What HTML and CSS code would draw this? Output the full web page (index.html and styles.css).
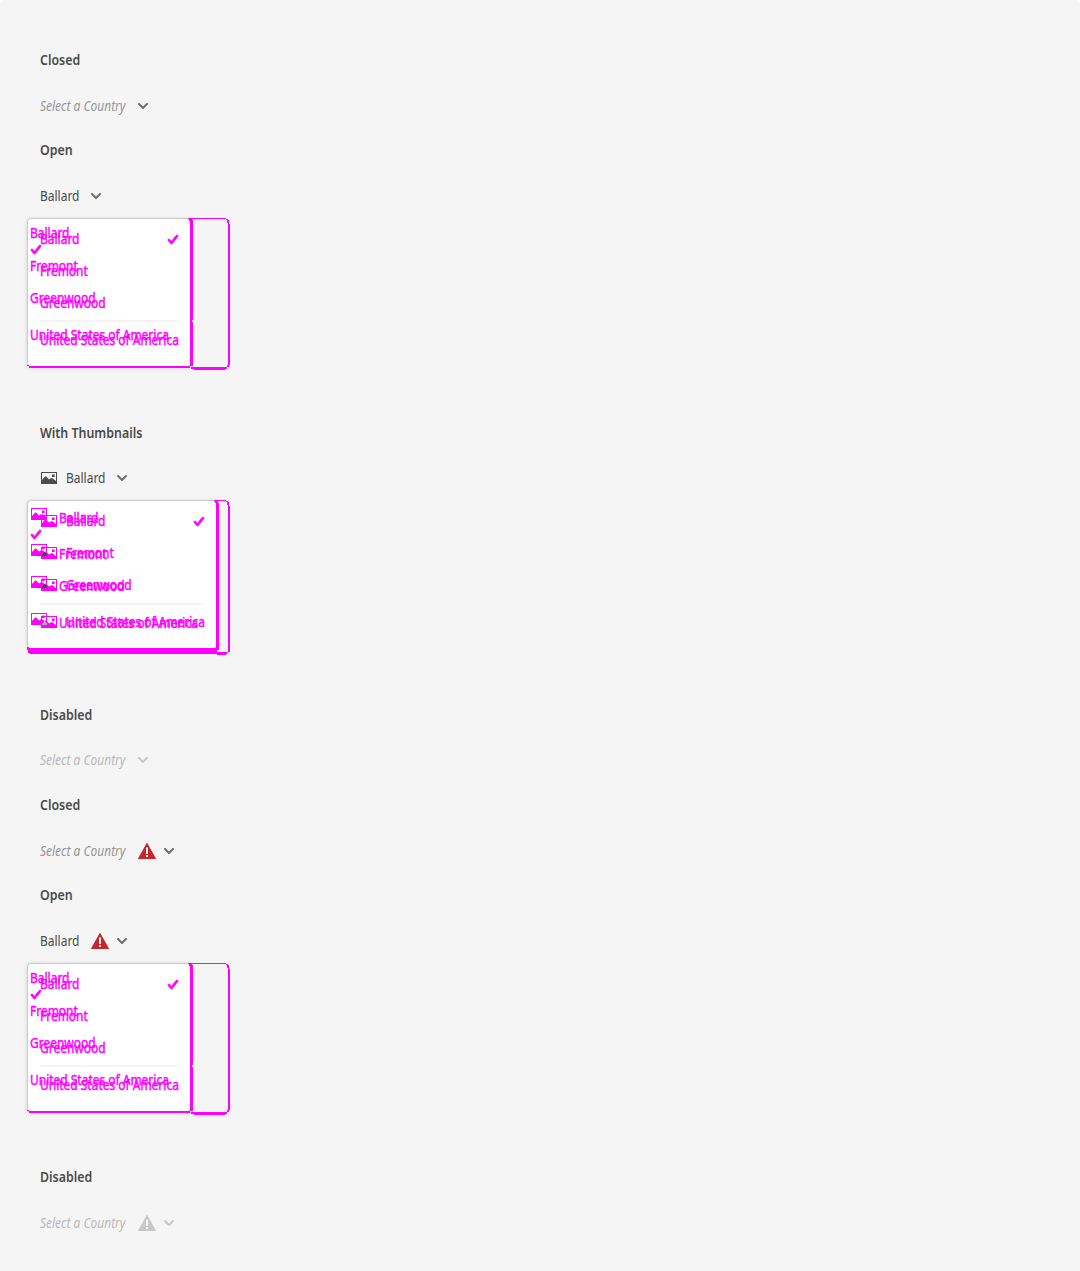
FILE: index.html
```html
<!DOCTYPE html>
<html lang="en">
<head>
<meta charset="utf-8">
<title>Select a Country</title>
<link rel="stylesheet" href="styles.css">
</head>
<body>
<svg class="sprite" aria-hidden="true">
  <symbol id="chevron" viewBox="0 0 10 6"><path d="M9.99 1.01A1 1 0 0 0 8.283.303L5 3.586 1.717.303A1 1 0 1 0 .303 1.717l3.99 3.98a1 1 0 0 0 1.414 0l3.99-3.98a.997.997 0 0 0 .293-.707z"/></symbol>
  <symbol id="check" viewBox="0 0 12 12"><path d="M4.5 10a1.022 1.022 0 0 1-.799-.384l-2.488-3a1 1 0 0 1 1.576-1.233L4.5 7.376l4.712-5.991a1 1 0 1 1 1.576 1.23l-5.51 7A.978.978 0 0 1 4.5 10z" stroke="currentColor" stroke-width=".9"/></symbol>
  <symbol id="alert" viewBox="0 0 18 18"><path d="M8.564 1.289L.2 16.256A.5.5 0 0 0 .636 17h16.728a.5.5 0 0 0 .436-.744L9.436 1.289a.5.5 0 0 0-.872 0zM10 14.75a.25.25 0 0 1-.25.25h-1.5a.25.25 0 0 1-.25-.25v-1.5a.25.25 0 0 1 .25-.25h1.5a.25.25 0 0 1 .25.25zm0-3a.25.25 0 0 1-.25.25h-1.5a.25.25 0 0 1-.25-.25v-6a.25.25 0 0 1 .25-.25h1.5a.25.25 0 0 1 .25.25z"/></symbol>
  <symbol id="image" viewBox="0 0 16 12"><path fill-rule="evenodd" d="M0 0h16v12H0zM1 1v7l3.2-3.4h1L8 7.4 10 6.2h1.4L15 9V1zM11 2.4h2.6v2.5H11z"/></symbol>
</svg>
<main class="page">
  <section class="example">
    <h4>Closed</h4>
    <div class="field placeholder"><span class="label">Select a Country</span><svg class="chevron"><use href="#chevron"/></svg></div>
  </section>

  <section class="example open">
    <h4>Open</h4>
    <div class="field"><span class="label">Ballard</span><svg class="chevron"><use href="#chevron"/></svg></div>
    <div class="menu">
      <div class="panel"><hr></div>
      <svg class="outline" viewBox="0 0 204 153"><path d="M2 148H163V150H2zM0 147h2v1H0zM161 0h4v2h1v146h-3V3h-1V1h-1zM165 0h34v1h-34zM199 1h2v1h1v4h1v141h-2V5h-1V2h-1zM164 149h36v2h-36zM167 151h31v1h-31zM200 147h2v2h-2z"/><path class="gap" d="M165 102h1v2h-1z"/></svg>
      <ul class="list before">
        <li><span>Ballard</span></li><li class="mark"><svg class="check"><use href="#check"/></svg></li><li><span>Fremont</span></li><li><span>Greenwood</span></li><li><span>United States of America</span></li>
      </ul>
      <ul class="list after">
        <li><span>Ballard</span><svg class="check"><use href="#check"/></svg></li><li><span>Fremont</span></li><li><span>Greenwood</span></li><li><span>United States of America</span></li>
      </ul>
    </div>
  </section>

  <section class="example open thumbs">
    <h4>With Thumbnails</h4>
    <div class="field"><svg class="image"><use href="#image"/></svg><span class="label">Ballard</span><svg class="chevron"><use href="#chevron"/></svg></div>
    <div class="menu">
      <div class="panel"><hr></div>
      <svg class="outline" viewBox="0 0 204 156"><path d="M0 147h2v1h187v-1h2v3h-1v2h-2v1H3v-1H1v-2H0zM187 0h3v1h1v2h1v147h-3V3h-1V1h-1zM190 0h9v1h-9zM199 1h2v1h1v4h1v146h-2V5h-1V2h-1zM1 152h200v1h-1v1H3v-1H1z"/><path d="M190 153h9v2h-9z"/></svg>
      <ul class="list before">
        <li><svg class="image"><use href="#image"/></svg><span>Ballard</span></li><li class="mark"><svg class="check"><use href="#check"/></svg></li><li><svg class="image"><use href="#image"/></svg><span>Fremont</span></li><li><svg class="image"><use href="#image"/></svg><span>Greenwood</span></li><li><svg class="image"><use href="#image"/></svg><span>United States of America</span></li>
      </ul>
      <ul class="list after">
        <li><svg class="image"><use href="#image"/></svg><span>Ballard</span><svg class="check"><use href="#check"/></svg></li><li><svg class="image"><use href="#image"/></svg><span>Fremont</span></li><li><svg class="image"><use href="#image"/></svg><span>Greenwood</span></li><li><svg class="image"><use href="#image"/></svg><span>United States of America</span></li>
      </ul>
      <svg class="overlap" viewBox="0 0 204 156"><path d="M15 54l2-2 3 2v2h-5zM15 86l2-2 3 2v2h-5z"/><path class="light" d="M15 123l2-2 3 2v2h-5z"/></svg>
    </div>
  </section>

  <section class="example high">
    <h4>Disabled</h4>
    <div class="field placeholder disabled"><span class="label">Select a Country</span><svg class="chevron"><use href="#chevron"/></svg></div>
  </section>

  <section class="example">
    <h4>Closed</h4>
    <div class="field placeholder"><span class="label">Select a Country</span><svg class="alert"><use href="#alert"/></svg><svg class="chevron"><use href="#chevron"/></svg></div>
  </section>

  <section class="example open last">
    <h4>Open</h4>
    <div class="field"><span class="label">Ballard</span><svg class="alert"><use href="#alert"/></svg><svg class="chevron"><use href="#chevron"/></svg></div>
    <div class="menu">
      <div class="panel"><hr></div>
      <svg class="outline" viewBox="0 0 204 153"><path d="M2 148H163V150H2zM0 147h2v1H0zM161 0h4v2h1v146h-3V3h-1V1h-1zM165 0h34v1h-34zM199 1h2v1h1v4h1v141h-2V5h-1V2h-1zM164 149h36v2h-36zM167 151h31v1h-31zM200 147h2v2h-2z"/><path class="gap" d="M165 102h1v2h-1z"/></svg>
      <ul class="list before">
        <li><span>Ballard</span></li><li class="mark"><svg class="check"><use href="#check"/></svg></li><li><span>Fremont</span></li><li><span>Greenwood</span></li><li><span>United States of America</span></li>
      </ul>
      <ul class="list after">
        <li><span>Ballard</span><svg class="check"><use href="#check"/></svg></li><li><span>Fremont</span></li><li><span>Greenwood</span></li><li><span>United States of America</span></li>
      </ul>
    </div>
  </section>

  <section class="example">
    <h4>Disabled</h4>
    <div class="field placeholder disabled"><span class="label">Select a Country</span><svg class="alert"><use href="#alert"/></svg><svg class="chevron"><use href="#chevron"/></svg></div>
  </section>
</main>
</body>
</html>
```
FILE: styles.css
```css
* { box-sizing: border-box; }
body { margin: 0; background: #fff; font: 14px/20px "Noto Sans", "Open Sans", sans-serif; color: #4b4b4b; }
svg { display: block; flex: none; fill: currentColor; overflow: visible; }
.sprite { position: absolute; width: 0; height: 0; }
.page { height: 1271px; padding: 50px 40px 0; background: #f5f5f5; border-radius: 4px 4px 0 0; }

.example { position: relative; height: 90px; }
.example.open { height: 283px; }
.example.thumbs, .example.last { height: 282px; }
h4 { margin: 0 0 20px; font-size: 14px; font-weight: 600; line-height: 20px; transform: scaleX(.885); transform-origin: 0 0; }
.thumbs h4, .high h4 { margin-bottom: 19px; }

.field { display: flex; align-items: center; height: 32px; }
.label { width: 39px; margin-right: 12px; white-space: nowrap; transform: scaleX(.855); transform-origin: 0 0; }
.placeholder .label { width: 86px; color: #959595; font-style: italic; }
.chevron { width: 10px; height: 6px; color: #6e6e6e; }
.alert { width: 18px; height: 18px; margin-right: 8px; color: #c9252d; }
.image { width: 16px; height: 12px; }
.field .image { margin: 0 9px 0 1px; }
.disabled .label { color: #b9b9b9; }
.disabled .chevron, .disabled .alert { color: #c8c8c8; }

.menu { position: absolute; top: 78px; left: -13px; width: 204px; height: 153px; color: #f0f; }
.thumbs .menu { top: 77px; height: 156px; }
.panel { width: 164px; height: 149px; padding: 101px 12px 0; background: #fff; border: 1px solid #cacaca; border-radius: 4px; box-shadow: 0 1px 4px rgba(0, 0, 0, .15); }
.thumbs .panel { width: 190px; padding-top: 102px; }
.panel hr { height: 2px; margin: 0; border: 0; background: #f4f4f4; }
.outline, .overlap { position: absolute; inset: 0; width: 100%; height: 100%; shape-rendering: crispEdges; }
.outline .gap { fill: #fff; }
.overlap { fill: #4b4b4b; }
.overlap .light { fill: #b3b3b3; }

.list { position: absolute; margin: 0; padding: 0; list-style: none; }
.list li { display: flex; align-items: center; height: 32px; }
.list span { white-space: nowrap; transform: scaleX(.855); transform-origin: 0 0; -webkit-text-stroke: .45px #f0f; }
.list .check { width: 12px; height: 12px; margin-top: 2px; }
.list li:last-child { margin-top: 5px; }

.before { top: 5px; left: 3px; }
.before li:first-child { height: 20px; }
.before .mark { height: 12px; }
.before .mark + li { margin-top: -5px; }
.thumbs .before { top: 8px; }
.thumbs .before .mark + li { margin-top: -2px; }
.thumbs .before .image { margin: -8px 12px 0 1px; }

.after { top: 5px; left: 13px; width: 139px; }
.thumbs .after { width: 165px; }
.after .check { margin-left: auto; }
.thumbs .after .image { margin: 0 9px 0 1px; }
```
